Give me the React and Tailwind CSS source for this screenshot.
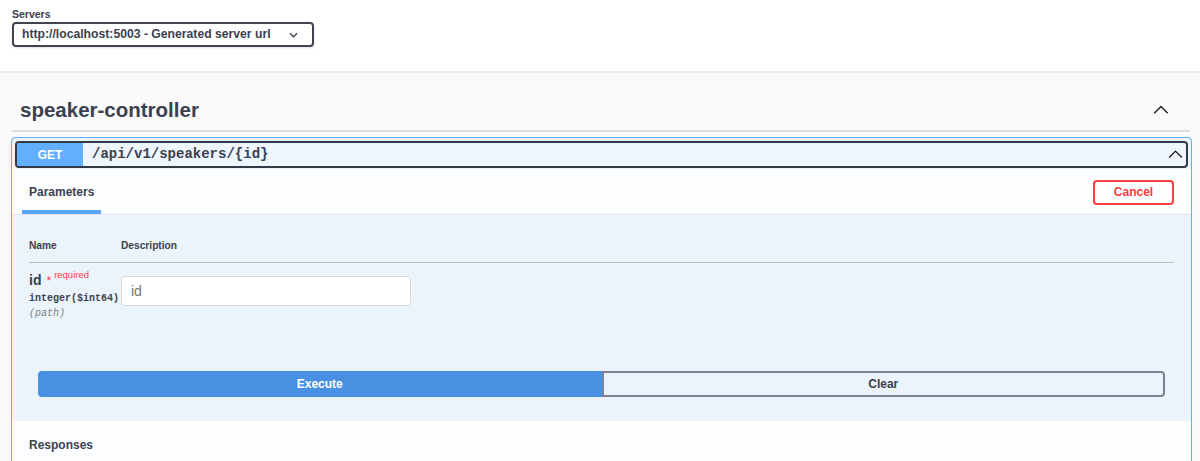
import React from 'react';

const ChevronUp = ({ className }) => (
  <svg viewBox="0 0 20 20" className={className} fill="none" stroke="currentColor" strokeWidth="1.6">
    <path d="M2.5 13.5 L10 6 L17.5 13.5" />
  </svg>
);

const App = () => {
  return (
    <div className="min-h-screen bg-[#fafafa] text-[#3b4151] font-['Liberation_Sans',Arial,sans-serif]">
      {/* servers */}
      <div className="h-[73px] bg-white border-b-[2px] border-[#ebebeb] px-3 pt-[7px]">
        <div className="text-[10.5px] leading-[14px] font-bold">Servers</div>
        <div className="mt-px w-[302px] h-[25px] border-2 border-[#41444e] rounded-[4px] shadow-sm flex items-center justify-between pl-[8px] pr-[14px]">
          <span className="text-[12.2px] font-bold whitespace-nowrap">http://localhost:5003 - Generated server url</span>
          <svg viewBox="0 0 10 6" className="w-[9px] h-[6px]" fill="none" stroke="currentColor" strokeWidth="1.4">
            <path d="M1 1 L5 5 L9 1" />
          </svg>
        </div>
      </div>

      {/* tag */}
      <div className="ml-3 mr-[10px] pt-[22px] pb-[5px] pl-2 pr-[20px] border-b-[2px] border-[#dedede] flex items-center justify-between">
        <h3 className="text-[20.5px] leading-[30px] font-bold">speaker-controller</h3>
        <ChevronUp className="w-[18px] h-[18px] text-[#222]" />
      </div>

      {/* operation */}
      <div className="ml-[11px] mr-[8px] mt-[5px] border border-[#61affe] rounded-[4px] bg-[#edf4fc] overflow-hidden">
        <div className="m-[3px] mb-0 h-[27px] border-2 border-[#333a47] rounded-[4px] bg-[#eef5fd] flex items-center pr-[2px]">
          <span className="w-[66px] h-[23px] bg-[#61affe] text-white text-[12px] font-bold flex items-center justify-center rounded-l-[2px]">GET</span>
          <span className="ml-[9px] flex-1 font-['Liberation_Mono','Courier_New',monospace] text-[14px] font-bold">/api/v1/speakers/{'{id}'}</span>
          <ChevronUp className="w-[17px] h-[17px] text-[#222]" />
        </div>

        <div className="mt-px h-[46px] bg-[#fcfdff] border-b border-[#dfe5ee] flex items-end justify-between pl-[10px] pr-[17px]">
          <div className="h-[45px] pt-[5px] px-[7px] flex items-center border-b-[4px] border-[#5aa5f5]">
            <span className="text-[12px] font-bold">Parameters</span>
          </div>
          <button className="self-center mb-[-1px] w-[81px] h-[25px] border-2 border-[#f93e3e] rounded-[4px] text-[#f93e3e] text-[12px] font-bold bg-transparent">
            Cancel
          </button>
        </div>

        <div className="bg-[#ebf3fb] pb-[24px]">
          <div className="px-[17px] pt-[24px]">
            <div className="flex border-b border-[#b4becd] pb-[9px] text-[10.2px] leading-[14px] font-bold">
              <div className="w-[92px]">Name</div>
              <div>Description</div>
            </div>
            <div className="flex pt-[7px]">
              <div className="w-[92px]">
                <div className="flex items-start leading-[20px]">
                  <span className="text-[14px] font-bold">id</span>
                  <span className="ml-[5px] text-[#f93e3e] text-[12px] leading-[16px] pt-[3px]">*</span>
                  <span className="ml-[3px] text-[#f93e3e] text-[9.5px] leading-[12px] -mt-[1px]">required</span>
                </div>
                <div className="font-['Liberation_Mono','Courier_New',monospace] text-[10px] leading-[14px] font-bold mt-[2px]">integer($int64)</div>
                <div className="font-['Liberation_Mono','Courier_New',monospace] text-[10px] leading-[14px] italic text-[#808080] mt-px">(path)</div>
              </div>
              <div>
                <input
                  placeholder="id"
                  className="mt-[6px] w-[290px] h-[30px] bg-white border border-[#d9d9d9] rounded-[4px] px-[9px] text-[14px] placeholder:text-[#757575] outline-none"
                />
              </div>
            </div>
          </div>

          <div className="mt-[50px] px-[26px] flex">
            <button className="flex-1 h-[26px] bg-[#4990e2] border-2 border-[#4990e2] rounded-l-[4px] text-white text-[12px] font-bold">
              Execute
            </button>
            <button className="flex-1 h-[26px] bg-transparent border-2 border-[#7d8293] rounded-r-[4px] text-[#3b4151] text-[12px] font-bold">
              Clear
            </button>
          </div>
        </div>

        <div className="bg-[#fcfdff] h-[60px] px-[17px] pt-[15px]">
          <h4 className="text-[12px] leading-[18px] font-bold">Responses</h4>
        </div>
      </div>
    </div>
  );
};

export default App;
